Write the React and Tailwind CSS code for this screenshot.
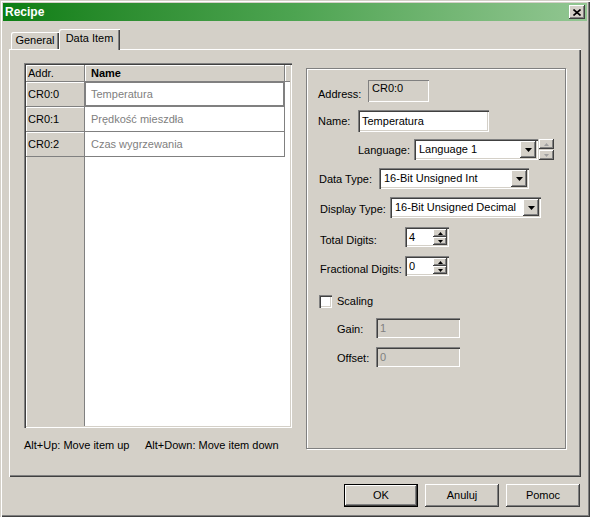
import React from "react";

const SUNKEN  = "shadow-[inset_1px_1px_0_#808080,inset_2px_2px_0_#404040,inset_-1px_-1px_0_#ffffff,inset_-2px_-2px_0_#d4d0c8]";
const SUNKEN1 = "shadow-[inset_1px_1px_0_#808080,inset_-1px_-1px_0_#ffffff]";
const RAISED  = "shadow-[inset_-1px_-1px_0_#404040,inset_1px_1px_0_#ffffff,inset_-2px_-2px_0_#808080,inset_2px_2px_0_#d4d0c8]";
const CELL    = "shadow-[inset_1px_1px_0_#ffffff] border-r border-b border-[#808080]";

const ROWS = [
  { addr: "CR0:0", name: "Temperatura" },
  { addr: "CR0:1", name: "Prędkość mieszdła" },
  { addr: "CR0:2", name: "Czas wygrzewania" },
];

function DownArrow() {
  return (
    <svg width="7" height="4" viewBox="0 0 7 4"><polygon points="0,0 7,0 3.5,4" fill="#000" /></svg>
  );
}

function Select({ className, value }) {
  return (
    <div className={`flex h-full bg-white p-[2px] ${SUNKEN} ${className}`}>
      <span className="flex-1 pl-[3px] flex items-center whitespace-nowrap overflow-hidden">{value}</span>
      <span className={`w-[16px] flex items-center justify-center bg-[#d4d0c8] ${RAISED}`}>
        <DownArrow />
      </span>
    </div>
  );
}

function TinyArrow({ up, color = "#000" }) {
  return (
    <svg width="5" height="3" viewBox="0 0 5 3">
      <polygon points={up ? "2.5,0 5,3 0,3" : "0,0 5,0 2.5,3"} fill={color} />
    </svg>
  );
}

function Spin({ value }) {
  return (
    <div className={`flex h-full w-[44px] bg-white p-[2px] ${SUNKEN}`}>
      <span className="flex-1 pl-[2px] flex items-center">{value}</span>
      <span className="w-[14px] flex flex-col">
        <span className={`h-[8px] flex items-center justify-center bg-[#d4d0c8] ${RAISED}`}><TinyArrow up /></span>
        <span className={`h-[8px] flex items-center justify-center bg-[#d4d0c8] ${RAISED}`}><TinyArrow /></span>
      </span>
    </div>
  );
}

function Button({ label, def }) {
  return (
    <div className={`w-[74px] h-[23px] ${def ? "border border-black" : ""}`}>
      <div className={`w-full h-full flex items-center justify-center bg-[#d4d0c8] ${RAISED}`}>{label}</div>
    </div>
  );
}

export default function App() {
  return (
    <div className="w-[590px] h-[517px] bg-[#d4d0c8] p-[3px] flex flex-col text-[11px] leading-[13px] text-black font-['Liberation_Sans',Arial,sans-serif] shadow-[inset_1px_1px_0_#d4d0c8,inset_2px_2px_0_#ffffff,inset_-1px_-1px_0_#404040,inset_-2px_-2px_0_#808080]">
      {/* title bar */}
      <div className="h-[18px] flex items-center justify-between pl-[2px] pr-[2px] bg-linear-to-r from-[#0a7e12] via-[#4da451] to-[#92c692]">
        <span className="font-bold text-white text-[12px]">Recipe</span>
        <div className={`w-[16px] h-[14px] flex items-center justify-center bg-[#d4d0c8] ${RAISED}`}>
          <svg width="8" height="7" viewBox="0 0 8 7">
            <path d="M0.5 0.5 L7.5 6.5 M7.5 0.5 L0.5 6.5" stroke="#000" strokeWidth="1.6" />
          </svg>
        </div>
      </div>

      {/* tabs */}
      <div className="mt-[8px] h-[20px] flex items-end pl-[8px]">
        <div className="w-[48px] h-[17px] flex items-center justify-center rounded-tl-[2px] shadow-[inset_1px_1px_0_#ffffff,inset_-1px_0_0_#404040,inset_-2px_0_0_#808080]">
          General
        </div>
        <div className="relative z-10 -mb-px w-[61px] h-[21px] pb-[2px] flex items-center justify-center bg-[#d4d0c8] rounded-tl-[2px] shadow-[inset_1px_1px_0_#ffffff,inset_-1px_0_0_#404040,inset_-2px_0_0_#808080]">
          Data Item
        </div>
      </div>

      {/* panel */}
      <div className="ml-[6px] w-[572px] h-[428px] flex items-start pl-[15px] pt-[14px] shadow-[inset_1px_1px_0_#ffffff,inset_-1px_-1px_0_#404040,inset_-2px_-2px_0_#808080]">
        {/* list */}
        <div className="flex flex-col">
          <div className={`w-[268px] h-[365px] p-[2px] flex flex-col ${SUNKEN}`}>
            <div className="h-[17px] flex">
              <div className={`w-[59px] pl-[2px] flex items-center ${CELL}`}>Addr.</div>
              <div className={`w-[200px] pl-[6px] flex items-center font-bold ${CELL}`}>Name</div>
              <div className="flex-1 shadow-[inset_1px_1px_0_#ffffff] border-b border-[#808080]" />
            </div>
            {ROWS.map((r, i) => (
              <div key={r.addr} className="h-[25px] flex">
                <div className={`w-[59px] pl-[2px] flex items-center ${CELL}`}>{r.addr}</div>
                <div className={`w-[200px] pl-[5px] flex items-center bg-white text-[#808080] border-[#808080] ${i === 0 ? "border-t border-l border-r-2 border-b-2" : "border-r border-b pl-[6px]"}`}>
                  {r.name}
                </div>
                <div className="flex-1 bg-white" />
              </div>
            ))}
            <div className="flex-1 flex">
              <div className="w-[59px] border-r border-[#808080] shadow-[inset_1px_0_0_#ffffff]" />
              <div className="flex-1 bg-white" />
            </div>
          </div>
          <div className="mt-[11px] flex">
            <span className="w-[121px]">Alt+Up: Move item up</span>
            <span>Alt+Down: Move item down</span>
          </div>
        </div>

        {/* properties group */}
        <div className="ml-[14px] mt-[5px] w-[260px] h-[381px] border border-[#808080] shadow-[inset_1px_1px_0_#ffffff,1px_1px_0_#ffffff] flex flex-col">
          <div className="mt-[11px] h-[22px] flex">
            <span className="w-[61px] pl-[11px] pt-[8px]">Address:</span>
            <div className={`w-[61px] h-full bg-[#d4d0c8] pl-[4px] pt-[2px] ${SUNKEN1}`}>CR0:0</div>
          </div>
          <div className="mt-[8px] h-[22px] flex items-center">
            <span className="w-[51px] pl-[11px]">Name:</span>
            <div className={`w-[131px] h-full bg-white pl-[4px] flex items-center ${SUNKEN}`}>Temperatura</div>
          </div>
          <div className="mt-[7px] h-[21px] flex items-center">
            <span className="w-[107px] pl-[51px] pt-[2px]">Language:</span>
            <Select className="w-[124px]" value="Language 1" />
            <div className="ml-[1px] w-[15px] h-full flex flex-col justify-between">
              <span className={`h-[10px] flex items-center justify-center bg-[#d4d0c8] ${RAISED}`}><TinyArrow up color="#a0a0a0" /></span>
              <span className={`h-[10px] flex items-center justify-center bg-[#d4d0c8] ${RAISED}`}><TinyArrow color="#a0a0a0" /></span>
            </div>
          </div>
          <div className="mt-[8px] h-[21px] flex items-center">
            <span className="w-[72px] pl-[12px] pt-[2px]">Data Type:</span>
            <Select className="w-[150px]" value="16-Bit Unsigned Int" />
          </div>
          <div className="mt-[8px] h-[21px] flex items-center">
            <span className="w-[83px] pl-[13px] pt-[4px]">Display Type:</span>
            <Select className="w-[151px]" value="16-Bit Unsigned Decimal" />
          </div>
          <div className="mt-[9px] h-[20px] flex items-center">
            <span className="w-[98px] pl-[13px] pt-[6px]">Total Digits:</span>
            <Spin value="4" />
          </div>
          <div className="mt-[9px] h-[20px] flex items-center">
            <span className="w-[98px] pl-[13px] pt-[6px]">Fractional Digits:</span>
            <Spin value="0" />
          </div>
          <div className="mt-[19px] h-[13px] flex items-center">
            <span className={`ml-[12px] w-[13px] h-[13px] bg-white ${SUNKEN}`} />
            <span className="ml-[5px]">Scaling</span>
          </div>
          <div className="mt-[10px] h-[20px] flex items-center">
            <span className="w-[69px] pl-[30px] pt-[2px]">Gain:</span>
            <div className={`w-[84px] h-full bg-[#d4d0c8] text-[#808080] pl-[4px] flex items-center ${SUNKEN}`}>1</div>
          </div>
          <div className="mt-[9px] h-[20px] flex items-center">
            <span className="w-[69px] pl-[30px] pt-[2px]">Offset:</span>
            <div className={`w-[84px] h-full bg-[#d4d0c8] text-[#808080] pl-[4px] flex items-center ${SUNKEN}`}>0</div>
          </div>
        </div>
      </div>

      {/* buttons */}
      <div className="mt-[7px] flex justify-end gap-[7px] pr-[7px]">
        <Button label="OK" def />
        <Button label="Anuluj" />
        <Button label="Pomoc" />
      </div>
    </div>
  );
}
